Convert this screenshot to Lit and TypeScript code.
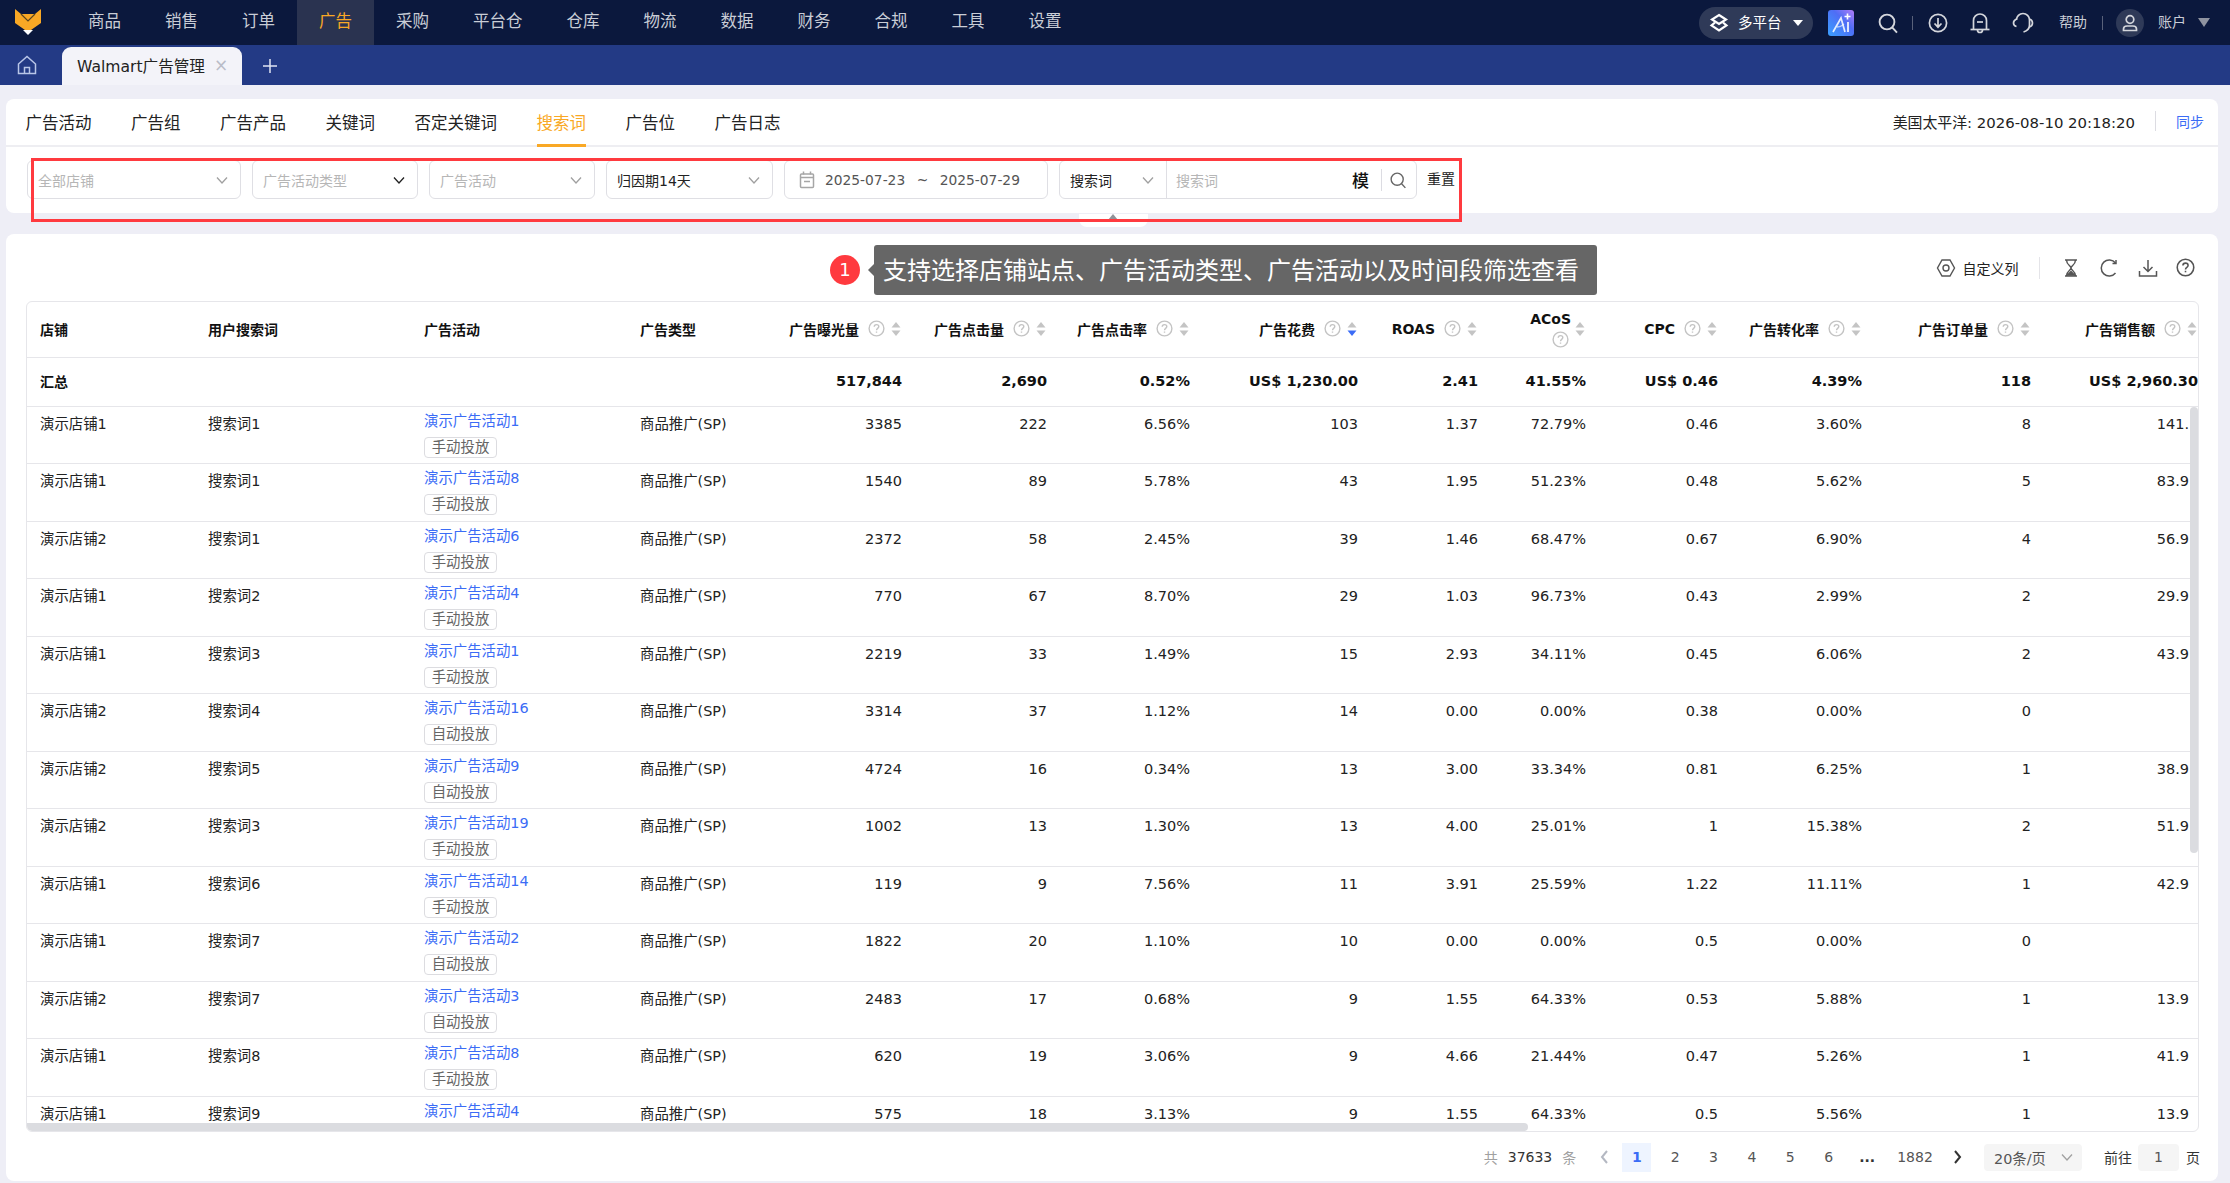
import { LitElement, html, css, svg } from "lit";
import { customElement } from "lit/decorators.js";

const NAV = ["商品", "销售", "订单", "广告", "采购", "平台仓", "仓库", "物流", "数据", "财务", "合规", "工具", "设置"];
const TABS = ["广告活动", "广告组", "广告产品", "关键词", "否定关键词", "搜索词", "广告位", "广告日志"];
const PAGES = ["1", "2", "3", "4", "5", "6"];

const COLS = [
  { label: "广告曝光量" },
  { label: "广告点击量" },
  { label: "广告点击率" },
  { label: "广告花费", active: true },
  { label: "ROAS" },
  { label: "ACoS", wrap: true },
  { label: "CPC" },
  { label: "广告转化率" },
  { label: "广告订单量" },
  { label: "广告销售额" },
];

const TOTALS = ["517,844", "2,690", "0.52%", "US$ 1,230.00", "2.41", "41.55%", "US$ 0.46", "4.39%", "118", "US$ 2,960.30"];

// shop, term, campaign, tag, then the ten metric columns
// the last row is scrolled under the table edge, so it shows no tag
const ROWS: string[][] = [
  ["1", "1", "1", "手动投放", "3385", "222", "6.56%", "103", "1.37", "72.79%", "0.46", "3.60%", "8", "141."],
  ["1", "1", "8", "手动投放", "1540", "89", "5.78%", "43", "1.95", "51.23%", "0.48", "5.62%", "5", "83.9"],
  ["2", "1", "6", "手动投放", "2372", "58", "2.45%", "39", "1.46", "68.47%", "0.67", "6.90%", "4", "56.9"],
  ["1", "2", "4", "手动投放", "770", "67", "8.70%", "29", "1.03", "96.73%", "0.43", "2.99%", "2", "29.9"],
  ["1", "3", "1", "手动投放", "2219", "33", "1.49%", "15", "2.93", "34.11%", "0.45", "6.06%", "2", "43.9"],
  ["2", "4", "16", "自动投放", "3314", "37", "1.12%", "14", "0.00", "0.00%", "0.38", "0.00%", "0", ""],
  ["2", "5", "9", "自动投放", "4724", "16", "0.34%", "13", "3.00", "33.34%", "0.81", "6.25%", "1", "38.9"],
  ["2", "3", "19", "手动投放", "1002", "13", "1.30%", "13", "4.00", "25.01%", "1", "15.38%", "2", "51.9"],
  ["1", "6", "14", "手动投放", "119", "9", "7.56%", "11", "3.91", "25.59%", "1.22", "11.11%", "1", "42.9"],
  ["1", "7", "2", "自动投放", "1822", "20", "1.10%", "10", "0.00", "0.00%", "0.5", "0.00%", "0", ""],
  ["2", "7", "3", "自动投放", "2483", "17", "0.68%", "9", "1.55", "64.33%", "0.53", "5.88%", "1", "13.9"],
  ["1", "8", "8", "手动投放", "620", "19", "3.06%", "9", "4.66", "21.44%", "0.47", "5.26%", "1", "41.9"],
  ["1", "9", "4", "", "575", "18", "3.13%", "9", "1.55", "64.33%", "0.5", "5.56%", "1", "13.9"],
];

const chevron = (color = "#a0a0a0") => html`
  <svg class="chev" width="14" height="14" viewBox="0 0 14 14" fill="none" stroke=${color} stroke-width="1.3">
    <path d="M2 4.5l5 5.5 5-5.5" />
  </svg>
`;

const helpIcon = (color = "#c4c4c4", size = 17) => html`
  <svg class="help" width=${size} height=${size} viewBox="0 0 17 17" fill="none" stroke=${color} stroke-width="1.4">
    <circle cx="8.5" cy="8.5" r="7.4" />
    <path d="M6.2 6.8c0-1.4 1-2.2 2.3-2.2s2.3.8 2.3 2c0 1.8-2.3 1.8-2.3 3.6" />
    <path d="M8.5 11.4v1.4" />
  </svg>
`;

const sortIcon = (active = false) => html`
  <svg class="sort" width="10" height="16" viewBox="0 0 10 16">
    <path d="M5 1l4.5 5.5h-9z" fill="#c4c4c4" />
    <path d="M5 15l-4.5-5.5h9z" fill=${active ? "#3b6cf6" : "#c4c4c4"} />
  </svg>
`;

const SEARCH = svg`<circle cx="10" cy="10" r="7.4" /><path d="M15.4 15.6l4.6 5" />`;

@customElement("app-root")
export class AppRoot extends LitElement {
  static styles = css`
    :host {
      display: block;
      position: relative;
      width: 2230px;
      height: 1183px;
      overflow: hidden;
      background: #eeeef6;
      color: #222;
      font-family: "DejaVu Sans", "Noto Sans CJK SC", sans-serif;
      font-size: 14px;
    }

    /* top bar */
    .topbar {
      display: flex;
      align-items: center;
      height: 45px;
      background: #0b183d;
      color: #c9cdd6;
      font-size: 16.5px;
    }
    .logo {
      width: 66px;
      height: 45px;
      flex: none;
    }
    .nav-item {
      height: 45px;
      padding: 0 22px;
      line-height: 43px;
    }
    .nav-item.active {
      background: #2a3350;
      color: #f9a825;
    }
    .top-right {
      display: flex;
      align-items: center;
      margin-left: auto;
      padding-right: 20px;
      font-size: 14px;
    }
    .top-right svg {
      display: block;
      flex: none;
    }
    .top-right span {
      padding-bottom: 3px;
    }
    .pill {
      display: flex;
      align-items: center;
      box-sizing: border-box;
      width: 114px;
      height: 32px;
      padding-left: 10px;
      border-radius: 16px;
      background: #2f3a58;
      color: #fff;
    }
    .pill span {
      margin: 0 10px 0 9px;
      font-size: 14.5px;
    }
    .vline {
      width: 1px;
      height: 14px;
      background: #59617a;
      flex: none;
    }
    .avatar {
      display: flex;
      align-items: center;
      justify-content: center;
      width: 28px;
      height: 28px;
      border-radius: 50%;
      background: #2f3a58;
    }
    .m12 { margin-left: 12px; }
    .m13 { margin-left: 13px; }
    .m14 { margin-left: 14px; }
    .m15 { margin-left: 15px; }
    .m21 { margin-left: 21px; }
    .m23 { margin-left: 23px; }
    .m25 { margin-left: 25px; }

    /* tab strip */
    .tabstrip {
      display: flex;
      align-items: flex-end;
      height: 40px;
      background: #233a85;
    }
    .home {
      display: flex;
      align-items: center;
      justify-content: center;
      width: 54px;
      height: 40px;
      margin-right: 8px;
    }
    .doc-tab {
      display: flex;
      align-items: center;
      box-sizing: border-box;
      width: 180px;
      height: 38px;
      padding: 0 0 2px 15px;
      border-radius: 9px 9px 0 0;
      background: #f3f3f9;
      color: #222;
      font-size: 15.6px;
    }
    .doc-tab .close {
      margin-left: 9px;
      color: #b9bcc8;
      font-size: 17px;
      line-height: 1;
    }
    .add {
      margin: 0 0 9px 18px;
    }

    /* page */
    .page {
      display: flex;
      flex-direction: column;
      gap: 21px;
      padding: 14px 12px 0 6px;
    }
    .card {
      border-radius: 8px;
      background: #fff;
    }
    .filters-card {
      height: 114px;
    }
    .tabs {
      display: flex;
      align-items: stretch;
      gap: 39.5px;
      box-sizing: border-box;
      height: 48px;
      padding: 0 14px 0 19.5px;
      border-bottom: 2px solid #eeeef2;
      font-size: 16.5px;
    }
    .tab {
      box-sizing: border-box;
      height: 48px;
      line-height: 50px;
      color: #222;
    }
    .tab.active {
      border-bottom: 3px solid #f9a825;
      color: #f9a825;
    }
    .sync {
      display: flex;
      align-items: center;
      margin-left: auto;
      font-size: 14.9px;
      padding-bottom: 2px;
    }
    .sync i {
      width: 1px;
      height: 20px;
      margin: 0 20px;
      background: #dcdce2;
    }
    .sync b {
      color: #3b6cf6;
      font-weight: 400;
      font-size: 14px;
    }
    .filters {
      display: flex;
      align-items: flex-start;
      gap: 11px;
      padding: 13px 0 0 21px;
    }
    .box {
      display: flex;
      align-items: center;
      box-sizing: border-box;
      height: 39px;
      padding: 0 11px 0 10px;
      border: 1px solid #dfdfe4;
      border-radius: 6px;
      font-size: 14px;
    }
    .box .chev {
      margin-left: auto;
      flex: none;
    }
    .ph {
      color: #b6b6b6;
    }
    .w214 { width: 214px; }
    .w166 { width: 166px; }
    .w167 { width: 167px; }
    .date {
      width: 264px;
      padding-left: 14px;
      color: #555;
      font-size: 13.8px;
    }
    .date .tilde {
      margin: 0 11.5px;
    }
    .date svg {
      margin-right: 10px;
    }
    .search {
      width: 358px;
      padding: 0;
    }
    .search .kind {
      display: flex;
      align-items: center;
      box-sizing: border-box;
      width: 107px;
      height: 100%;
      padding: 0 11px 0 10px;
      border-right: 1px solid #dfdfe4;
    }
    .search .term {
      flex: 1;
      padding-left: 9px;
    }
    .search .mo {
      color: #111;
      font-size: 17px;
      font-weight: 500;
    }
    .search .sep {
      width: 1px;
      height: 22px;
      margin: 0 7px 0 12px;
      background: #dcdce2;
    }
    .search svg.find {
      margin-right: 9px;
    }
    .reset {
      margin-left: -1px;
      line-height: 39px;
      font-size: 14px;
    }

    /* report card */
    .report {
      height: 947px;
    }
    .toolbar {
      display: flex;
      align-items: center;
      justify-content: flex-end;
      height: 67px;
      padding-right: 23px;
      font-size: 14px;
    }
    .toolbar svg {
      display: block;
    }
    .toolbar .cols {
      margin-left: 7px;
    }
    .toolbar .sep {
      width: 1px;
      height: 22px;
      margin: 0 21px 0 20px;
      background: #e4e4e8;
    }
    .toolbar .tools {
      display: flex;
      align-items: center;
      gap: 18.5px;
    }

    .table {
      position: relative;
      box-sizing: border-box;
      width: 2173px;
      height: 831px;
      margin-left: 20px;
      overflow: hidden;
      border: 1px solid #e6e6ea;
      border-radius: 6px;
    }
    .grid {
      display: grid;
      grid-template-columns: 167px 216px 216px 160px 116px 145px 143px 168px 120px 108px 132px 144px 169px 167px;
      box-sizing: border-box;
      border-bottom: 1px solid #e6e6ea;
    }
    .grid.head {
      height: 56px;
      padding-bottom: 2px;
      align-items: center;
      font-weight: 700;
      color: #111;
    }
    .grid.sum {
      height: 48.75px;
      padding-bottom: 1px;
      align-items: center;
      font-weight: 700;
      color: #111;
      font-size: 14.5px;
      white-space: nowrap;
    }
    .grid.row {
      grid-template-columns: 167px 216px 216px 160px 116px 145px 143px 168px 120px 108px 132px 144px 169px 158px;
      height: 57.5px;
      overflow: hidden;
      font-size: 14.4px;
    }
    .l {
      padding-left: 14px;
      white-space: nowrap;
    }
    .l.first {
      padding-left: 13px;
    }
    .sum .l {
      font-size: 14px;
    }
    .n {
      text-align: right;
      white-space: nowrap;
    }
    .row .l,
    .row .n {
      padding-top: 7px;
      line-height: 20px;
    }
    .row .n {
      font-size: 14.5px;
      overflow: hidden;
    }
    .row .camp {
      padding-top: 4px;
    }
    .link {
      display: block;
      color: #3b6cf6;
    }
    .tag {
      display: inline-block;
      box-sizing: border-box;
      width: 73px;
      height: 21px;
      margin-top: 6px;
      border: 1px solid #dcdce0;
      border-radius: 4px;
      color: #666;
      line-height: 19px;
      text-align: center;
    }
    .th {
      display: flex;
      align-items: center;
      justify-content: flex-end;
    }
    .th .help {
      margin: 0 6px 0 9px;
      flex: none;
    }
    .th .sort {
      margin-right: 1px;
      flex: none;
    }
    .th .stack {
      display: flex;
      flex-direction: column;
      align-items: flex-end;
      gap: 2px;
      line-height: 20px;
    }
    .th .stack .help {
      margin: 0 2px 0 0;
    }
    .stack + .sort {
      margin-left: 4px;
      margin-top: 1px;
    }
    .thumb-x {
      position: absolute;
      left: 0;
      bottom: 0;
      width: 1501px;
      height: 8px;
      border-radius: 0 4px 4px 0;
      background: #dbdce0;
    }
    .thumb-y {
      position: absolute;
      top: 105px;
      right: 0;
      width: 8px;
      height: 446px;
      border-radius: 4px;
      background: #dbdce0;
    }

    /* pager */
    .pager {
      display: flex;
      align-items: center;
      justify-content: flex-end;
      height: 50px;
      padding-right: 18px;
      color: #555;
      font-size: 14px;
    }
    .pager .muted {
      color: #a0a0a0;
    }
    .pager .count {
      margin: 0 10px;
      color: #333;
    }
    .pager .arrow {
      display: flex;
      align-items: center;
      justify-content: center;
      width: 20px;
      height: 29px;
    }
    .pager .prev {
      margin: 0 8px 0 18px;
    }
    .pager .num {
      width: 29px;
      height: 29px;
      margin-right: 9.4px;
      line-height: 29px;
      text-align: center;
    }
    .pager .num.on {
      background: #eef4ff;
      color: #3b6cf6;
      font-weight: 700;
    }
    .pager .dots {
      color: #333;
      font-weight: 700;
    }
    .pager .last {
      width: 48px;
      margin-right: 9px;
      text-align: center;
    }
    .pager .size {
      display: flex;
      align-items: center;
      box-sizing: border-box;
      width: 98px;
      height: 27px;
      margin: 0 22px 0 16px;
      padding: 0 8px 0 10px;
      border-radius: 4px;
      background: #f5f5f5;
      font-size: 14.4px;
    }
    .pager .size .chev {
      margin-left: auto;
    }
    .pager .goto {
      width: 41px;
      height: 27px;
      margin: 0 7px 0 6px;
      border-radius: 4px;
      background: #f5f5f5;
      line-height: 27px;
      text-align: center;
    }
    .pager .dark {
      color: #333;
    }

    /* annotation overlays */
    .mark {
      position: absolute;
      left: 31px;
      top: 158px;
      box-sizing: border-box;
      width: 1431px;
      height: 64px;
      border: 3px solid #ff3a3f;
    }
    .collapse {
      position: absolute;
      left: 1079px;
      top: 214px;
      width: 69px;
      height: 13px;
      border-radius: 0 0 8px 8px;
      background: #fff;
    }
    .collapse::before {
      content: "";
      position: absolute;
      left: 29px;
      top: 0;
      border: 5px solid transparent;
      border-top: 0;
      border-bottom: 6px solid #909399;
    }
    .tip {
      position: absolute;
      left: 874px;
      top: 245px;
      box-sizing: border-box;
      width: 723px;
      height: 50px;
      padding-left: 9px;
      border-radius: 3px;
      background: #666;
      color: #fff;
      font-size: 24px;
      line-height: 52px;
      white-space: nowrap;
    }
    .tip::before {
      content: "";
      position: absolute;
      left: -6px;
      top: 19px;
      border: 6px solid transparent;
      border-left: 0;
      border-right-color: #666;
    }
    .dot {
      position: absolute;
      left: 830px;
      top: 255px;
      width: 30px;
      height: 30px;
      border-radius: 50%;
      background: #ff3a3f;
      color: #fff;
      font-size: 18px;
      line-height: 30px;
      text-align: center;
    }
  `;

  private renderTopbar() {
    return html`
      <header class="topbar">
        <svg class="logo" viewBox="0 0 66 45">
          <path d="M15 9l6 5h14l6-5v14l-10 7h-6l-10-7z" fill="#f9a825" />
          <path d="M21 14l7 7 7-7" fill="none" stroke="#5a4520" stroke-width="1.2" />
          <path d="M23 30h10l-5 5z" fill="#fff" />
        </svg>
        ${NAV.map((n) => html`<div class="nav-item ${n === "广告" ? "active" : ""}">${n}</div>`)}
        <div class="top-right">
          <div class="pill">
            <svg width="20" height="20" viewBox="0 0 20 20" fill="none" stroke="#fff" stroke-width="2.2">
              <path d="M10 2l7 4.500-7 4.500-7-4.500z" />
              <path d="M6 9.500l-3.500 3 7.500 5 7.500-5-3.500-3" />
            </svg>
            <span>多平台</span>
            <svg width="12" height="8" viewBox="0 0 12 8"><path d="M1 1h10L6 7z" fill="#fff" /></svg>
          </div>
          <svg class="m15" width="26" height="26" viewBox="0 0 26 26">
            <defs>
              <linearGradient id="ai" x1="0" y1="1" x2="1" y2="0">
                <stop offset="0" stop-color="#3aa0ff" />
                <stop offset="0.6" stop-color="#4f6df5" />
                <stop offset="1" stop-color="#b27cf8" />
              </linearGradient>
            </defs>
            <rect width="26" height="26" rx="3" fill="url(#ai)" />
            <path d="M5 22L13 8l4 14" fill="none" stroke="#fff" stroke-width="1.700" opacity=".85" />
            <path d="M9 17c3 0 5-1 7-3" fill="none" stroke="#fff" stroke-width="1.300" opacity=".6" />
            <path d="M19.500 3.500v6M16.500 6.500h6" stroke="#fff" stroke-width="1.600" />
            <path d="M20 12v10" stroke="#fff" stroke-width="1.800" opacity=".9" />
          </svg>
          <svg class="m23" width="22" height="22" viewBox="0 0 22 22" fill="none" stroke="#d4d6dc" stroke-width="1.9">${SEARCH}</svg>
          <i class="vline m13"></i>
          <svg class="m15" width="20" height="20" viewBox="0 0 20 20" fill="none" stroke="#d4d6dc" stroke-width="1.7">
            <circle cx="10" cy="10" r="8.6" />
            <path d="M10 5v9M6.5 10.5l3.5 3.7 3.5-3.7" />
          </svg>
          <svg class="m21" width="22" height="22" viewBox="0 0 22 22" fill="none" stroke="#d4d6dc" stroke-width="1.7">
            <path d="M4.500 17V8.500a6.500 6.500 0 0 1 13 0V17" />
            <path d="M1.500 17.500h19" />
            <path d="M8 10h6" />
            <path d="M8.500 18a2.500 2.500 0 0 0 5 0" />
          </svg>
          <svg class="m21" width="22" height="22" viewBox="0 0 22 22" fill="none" stroke="#d4d6dc" stroke-width="1.7">
            <path d="M4.500 8a6.500 6.500 0 0 1 13 0v5c0 3.500-2.500 6-6 7" />
            <path d="M4.500 7C2.500 8 1.500 9.500 1.500 11s1 3 3 3.500" />
            <path d="M17.500 7c1.500.5 3 2 3 4s-1.500 3.500-3 4" />
          </svg>
          <span class="m25">帮助</span>
          <i class="vline m15"></i>
          <div class="avatar m13">
            <svg width="20" height="20" viewBox="0 0 20 20" fill="none" stroke="#d4d6dc" stroke-width="1.7">
              <circle cx="10" cy="6.500" r="3.800" />
              <path d="M3.500 17.500v-1.500c0-2 1.500-3 3.500-3h6c2 0 3.500 1 3.500 3v1.500z" />
            </svg>
          </div>
          <span class="m14">账户</span>
          <svg class="m12" width="12" height="9" viewBox="0 0 12 9"><path d="M0 0h12L6 9z" fill="#8f93a0" /></svg>
        </div>
      </header>
      <div class="tabstrip">
        <div class="home">
          <svg width="20" height="20" viewBox="0 0 20 20" fill="none" stroke="#b9c6e8" stroke-width="1.500">
            <path d="M1.500 9L10 1.500 18.500 9v9.500h-17z" />
            <path d="M7.500 18.500v-6h5v6" />
          </svg>
        </div>
        <div class="doc-tab">Walmart广告管理<span class="close">×</span></div>
        <svg class="add" width="20" height="20" viewBox="0 0 20 20" stroke="#dfe4f2" stroke-width="1.500">
          <path d="M10 3v14M3 10h14" />
        </svg>
      </div>
    `;
  }

  private renderFilters() {
    return html`
      <section class="card filters-card">
        <div class="tabs">
          ${TABS.map((t) => html`<div class="tab ${t === "搜索词" ? "active" : ""}">${t}</div>`)}
          <div class="sync">美国太平洋: 2026-08-10 20:18:20<i></i><b>同步</b></div>
        </div>
        <div class="filters">
          <div class="box w214"><span class="ph">全部店铺</span>${chevron()}</div>
          <div class="box w166"><span class="ph">广告活动类型</span>${chevron("#222")}</div>
          <div class="box w166"><span class="ph">广告活动</span>${chevron()}</div>
          <div class="box w167">归因期14天${chevron()}</div>
          <div class="box date">
            <svg width="16" height="18" viewBox="0 0 16 18" fill="none" stroke="#a6a6a6" stroke-width="1.500">
              <rect x="1.500" y="3" width="13" height="13.500" rx="1" />
              <path d="M4.500 .5v3M11.500 .5v3M1.500 6.500h13M5 10.500h6" />
            </svg>
            2025-07-23<span class="tilde">~</span>2025-07-29
          </div>
          <div class="box search">
            <div class="kind">搜索词${chevron()}</div>
            <span class="ph term">搜索词</span>
            <span class="mo">模</span>
            <i class="sep"></i>
            <svg class="find" width="18" height="18" viewBox="0 0 22 22" fill="none" stroke="#666" stroke-width="1.700">${SEARCH}</svg>
          </div>
          <span class="reset">重置</span>
        </div>
      </section>
    `;
  }

  private renderHeader() {
    return html`
      <div class="grid head">
        <div class="l first">店铺</div>
        <div class="l">用户搜索词</div>
        <div class="l">广告活动</div>
        <div class="l">广告类型</div>
        ${COLS.map((c) =>
          c.wrap
            ? html`<div class="th">
                <div class="stack"><span>${c.label}</span>${helpIcon()}</div>
                ${sortIcon()}
              </div>`
            : html`<div class="th"><span>${c.label}</span>${helpIcon()}${sortIcon(c.active)}</div>`
        )}
      </div>
      <div class="grid sum">
        <div class="l first">汇总</div>
        <div></div>
        <div></div>
        <div></div>
        ${TOTALS.map((v) => html`<div class="n">${v}</div>`)}
      </div>
    `;
  }

  private renderRow(r: string[]) {
    const [shop, term, camp, tag, ...metrics] = r;
    return html`
      <div class="grid row">
        <div class="l first">演示店铺${shop}</div>
        <div class="l">搜索词${term}</div>
        <div class="l camp">
          <span class="link">演示广告活动${camp}</span>
          ${tag ? html`<span class="tag">${tag}</span>` : ""}
        </div>
        <div class="l">商品推广(SP)</div>
        ${metrics.map((v) => html`<div class="n">${v}</div>`)}
      </div>
    `;
  }

  private renderReport() {
    return html`
      <section class="card report">
        <div class="toolbar">
          <svg width="20" height="20" viewBox="0 0 20 20" fill="none" stroke="#555" stroke-width="1.400">
            <path d="M6 2h8l4.500 8-4.500 8H6l-4.500-8z" />
            <circle cx="10" cy="10" r="3" />
          </svg>
          <span class="cols">自定义列</span>
          <i class="sep"></i>
          <div class="tools">
            <svg width="20" height="20" viewBox="0 0 20 20" fill="none" stroke="#555" stroke-width="1.400">
              <path d="M4 2h12M4 18h12M5.500 2c0 5 4.500 5.500 4.500 8s-4.500 3-4.500 8M14.500 2c0 5-4.500 5.500-4.500 8s4.500 3 4.500 8" />
              <path d="M6.500 17l3.500-3.500 3.500 3.500z" fill="#555" />
            </svg>
            <svg width="20" height="20" viewBox="0 0 20 20" fill="none" stroke="#555" stroke-width="1.500">
              <path d="M16.500 5A8 8 0 1 0 16.500 15" />
              <path d="M13.500 5.500h3.500V2" />
            </svg>
            <svg width="20" height="20" viewBox="0 0 20 20" fill="none" stroke="#555" stroke-width="1.500">
              <path d="M10 2v11M5.500 9l4.500 4.500L14.500 9" />
              <path d="M1.500 13v5h17v-5" />
            </svg>
            ${helpIcon("#555", 19)}
          </div>
        </div>
        <div class="table">
          ${this.renderHeader()} ${ROWS.map((r) => this.renderRow(r))}
          <div class="thumb-y"></div>
          <div class="thumb-x"></div>
        </div>
        <div class="pager">
          <span class="muted">共</span><span class="count">37633</span><span class="muted">条</span>
          <span class="arrow prev">
            <svg width="10" height="16" viewBox="0 0 10 16" fill="none" stroke="#b4b8c2" stroke-width="2"><path d="M8 2L3 8l5 6" /></svg>
          </span>
          ${PAGES.map((p) => html`<span class="num ${p === "1" ? "on" : ""}">${p}</span>`)}
          <span class="num dots">...</span>
          <span class="num last">1882</span>
          <span class="arrow">
            <svg width="10" height="16" viewBox="0 0 10 16" fill="none" stroke="#333" stroke-width="2"><path d="M2 2l5 6-5 6" /></svg>
          </span>
          <span class="size">20条/页${chevron()}</span>
          <span class="dark">前往</span>
          <span class="goto">1</span>
          <span class="dark">页</span>
        </div>
      </section>
    `;
  }

  render() {
    return html`
      ${this.renderTopbar()}
      <main class="page">${this.renderFilters()} ${this.renderReport()}</main>
      <div class="collapse"></div>
      <div class="mark"></div>
      <div class="dot">1</div>
      <div class="tip">支持选择店铺站点、广告活动类型、广告活动以及时间段筛选查看</div>
    `;
  }
}
